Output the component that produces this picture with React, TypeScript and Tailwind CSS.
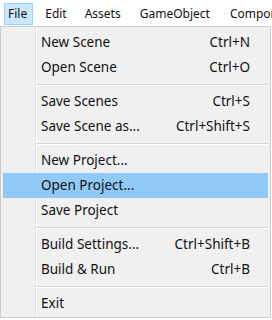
import React from "react";

type Item = { label: string; shortcut?: string; active?: boolean } | "sep";

const items: Item[] = [
  { label: "New Scene", shortcut: "Ctrl+N" },
  { label: "Open Scene", shortcut: "Ctrl+O" },
  "sep",
  { label: "Save Scenes", shortcut: "Ctrl+S" },
  { label: "Save Scene as...", shortcut: "Ctrl+Shift+S" },
  "sep",
  { label: "New Project..." },
  { label: "Open Project...", active: true },
  { label: "Save Project" },
  "sep",
  { label: "Build Settings...", shortcut: "Ctrl+Shift+B" },
  { label: "Build & Run", shortcut: "Ctrl+B" },
  "sep",
  { label: "Exit" },
];

export default function App() {
  return (
    <div
      className="w-[272px] h-[320px] bg-white overflow-hidden text-[#111111]"
      style={{ fontFamily: '"Noto Sans", "Open Sans", sans-serif' }}
    >
      <div className="h-[26px] flex items-start pt-[3px] pl-[4px] whitespace-nowrap text-[12px]">
        <div className="h-[22px] pl-[3px] pr-[5px] flex items-center bg-[#cce8ff] border border-[#99d1ff]">File</div>
        <div className="h-[22px] pl-[12px] pr-[9px] flex items-center">Edit</div>
        <div className="h-[22px] px-[9px] flex items-center">Assets</div>
        <div className="h-[22px] px-[10px] flex items-center">GameObject</div>
        <div className="h-[22px] px-[10px] flex items-center">Component</div>
      </div>
      <div className="w-[271px] h-[292px] bg-[#f0f0f0] border border-[#cccccc] relative pt-[3px] px-[2px] text-[13.5px]">
        <div className="absolute left-[34px] top-0 bottom-0 w-[1px] bg-[#e2e2e2]" />
        <div className="absolute left-[35px] top-0 bottom-0 w-[1px] bg-white" />
        {items.map((it, i) =>
          it === "sep" ? (
            <div key={i} className="h-[9px] flex flex-col justify-center pl-[33px] relative">
              <div className="h-[1px] bg-[#d7d7d7]" />
              <div className="h-[1px] bg-white" />
            </div>
          ) : (
            <div
              key={i}
              className={
                "h-[25px] flex items-center justify-between pl-[38px] pr-[18px] relative " +
                (it.active ? "bg-[#91c9f7]" : "")
              }
            >
              <span>{it.label}</span>
              {it.shortcut && <span>{it.shortcut}</span>}
            </div>
          )
        )}
      </div>
    </div>
  );
}
